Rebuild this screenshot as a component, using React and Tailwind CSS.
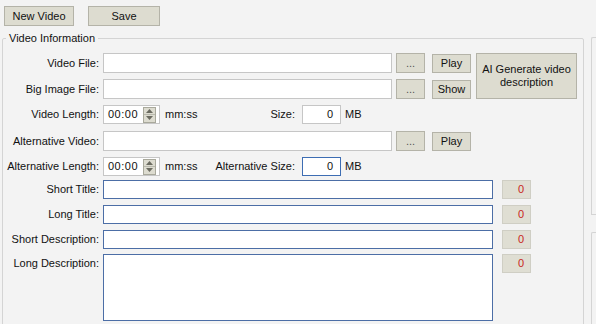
const font = "font-['Liberation_Sans',Arial,sans-serif]";

function Btn({ children, className = "" }) {
  return (
    <button
      className={`flex items-center justify-center bg-[#dddcd0] border border-[#b4b3a8] text-[11px] leading-[13px] text-[#111] ${className}`}
    >
      {children}
    </button>
  );
}

function Label({ children, className = "" }) {
  return (
    <div className={`w-[96px] mr-[4px] shrink-0 text-right text-[11px] leading-[13px] text-[#111] ${className}`}>
      {children}
    </div>
  );
}

function Spinner() {
  return (
    <div className="flex items-center justify-between w-[57px] h-[19px] bg-white border border-[#c6c6c6] pl-[4px] pr-[3px]">
      <span className="text-[11px] leading-[13px] tracking-[0.5px] text-[#111]">00:00</span>
      <div className="flex flex-col w-[13px] h-[16px] border border-[#a9a99c] bg-[#dddcd0]">
        <div className="flex-1 flex items-center justify-center border-b border-[#b9b9ad]">
          <svg width="7" height="4" viewBox="0 0 7 4">
            <path d="M0 4 L3.5 0 L7 4 Z" fill="#6b6b60" />
          </svg>
        </div>
        <div className="flex-1 flex items-center justify-center">
          <svg width="7" height="4" viewBox="0 0 7 4">
            <path d="M0 0 L3.5 4 L7 0 Z" fill="#6b6b60" />
          </svg>
        </div>
      </div>
    </div>
  );
}

function Counter({ className = "" }) {
  return (
    <div
      className={`ml-[9px] w-[29px] h-[19px] shrink-0 flex items-center justify-end pr-[6px] bg-[#dfded3] border border-[#cfcec4] text-[11px] leading-[13px] text-[#c81e1e] ${className}`}
    >
      0
    </div>
  );
}

function LengthRow({ label, sizeLabel, focused }) {
  return (
    <div className="flex items-center">
      <Label>{label}</Label>
      <Spinner />
      <span className="ml-[5px] w-[40px] text-[11px] leading-[13px] text-[#111]">mm:ss</span>
      <div className="w-[90px] text-right text-[11px] leading-[13px] text-[#111]">{sizeLabel}</div>
      <div
        className={`ml-[7px] w-[39px] h-[19px] bg-white flex items-center justify-end pr-[7px] text-[11px] leading-[13px] text-[#111] border ${
          focused ? "border-[#3d6db3]" : "border-[#c6c6c6]"
        }`}
      >
        0
      </div>
      <span className="ml-[4px] text-[11px] leading-[13px] text-[#111]">MB</span>
    </div>
  );
}

function FileRow({ label, action }) {
  return (
    <div className="flex items-center">
      <Label>{label}</Label>
      <div className="w-[289px] h-[20px] bg-white border border-[#c6c6c6]" />
      <Btn className="ml-[4px] w-[29px] h-[20px] text-[#555]">...</Btn>
      <Btn className="ml-[7px] w-[39px] h-[19px]">{action}</Btn>
    </div>
  );
}

function TextRow({ label }) {
  return (
    <div className="flex items-center">
      <Label>{label}</Label>
      <div className="w-[390px] h-[19px] bg-white border border-[#4c6ea6]" />
      <Counter />
    </div>
  );
}

export default function App() {
  return (
    <div className={`w-[596px] h-[324px] overflow-hidden bg-[#f3f3f3] ${font}`}>
      <div className="flex pt-[6px] pl-[4px]">
        <Btn className="w-[70px] h-[20px]">New Video</Btn>
        <Btn className="ml-[14px] w-[72px] h-[20px]">Save</Btn>
      </div>

      <div className="flex items-start mt-[6px]">
        <fieldset className="ml-[2px] w-[582px] h-[320px] shrink-0 border border-[#d4d4d4] rounded-[2px] p-0">
          <legend className="ml-[3px] px-[3px] text-[11px] leading-[13px] text-[#111]">
            Video Information
          </legend>

          <div className="flex flex-col pt-[8px]">
            <div className="flex items-start">
              <div className="flex flex-col gap-[6px]">
                <FileRow label="Video File:" action="Play" />
                <FileRow label="Big Image File:" action="Show" />
              </div>
              <Btn className="ml-[5px] w-[101px] h-[46px] text-center px-[4px]">
                AI Generate video
                <br />
                description
              </Btn>
            </div>

            <div className="mt-[6px]">
              <LengthRow label="Video Length:" sizeLabel="Size:" />
            </div>

            <div className="mt-[7px]">
              <FileRow label="Alternative Video:" action="Play" />
            </div>

            <div className="mt-[6px]">
              <LengthRow label="Alternative Length:" sizeLabel="Alternative Size:" focused />
            </div>

            <div className="mt-[4px]">
              <TextRow label="Short Title:" />
            </div>
            <div className="mt-[6px]">
              <TextRow label="Long Title:" />
            </div>
            <div className="mt-[6px]">
              <TextRow label="Short Description:" />
            </div>

            <div className="mt-[5px] flex items-start">
              <Label className="h-[19px] flex items-center justify-end">Long Description:</Label>
              <div className="w-[390px] h-[67px] bg-white border border-[#4c6ea6]" />
              <Counter />
            </div>
          </div>
        </fieldset>

        <div className="ml-[7px] mt-[5px] flex flex-col w-[20px]">
          <div className="h-[178px] border-l border-t border-b border-[#d4d4d4] rounded-tl-[2px]" />
          <div className="mt-[17px] h-[100px] border-l border-t border-[#d4d4d4] rounded-tl-[2px]" />
        </div>
      </div>
    </div>
  );
}
